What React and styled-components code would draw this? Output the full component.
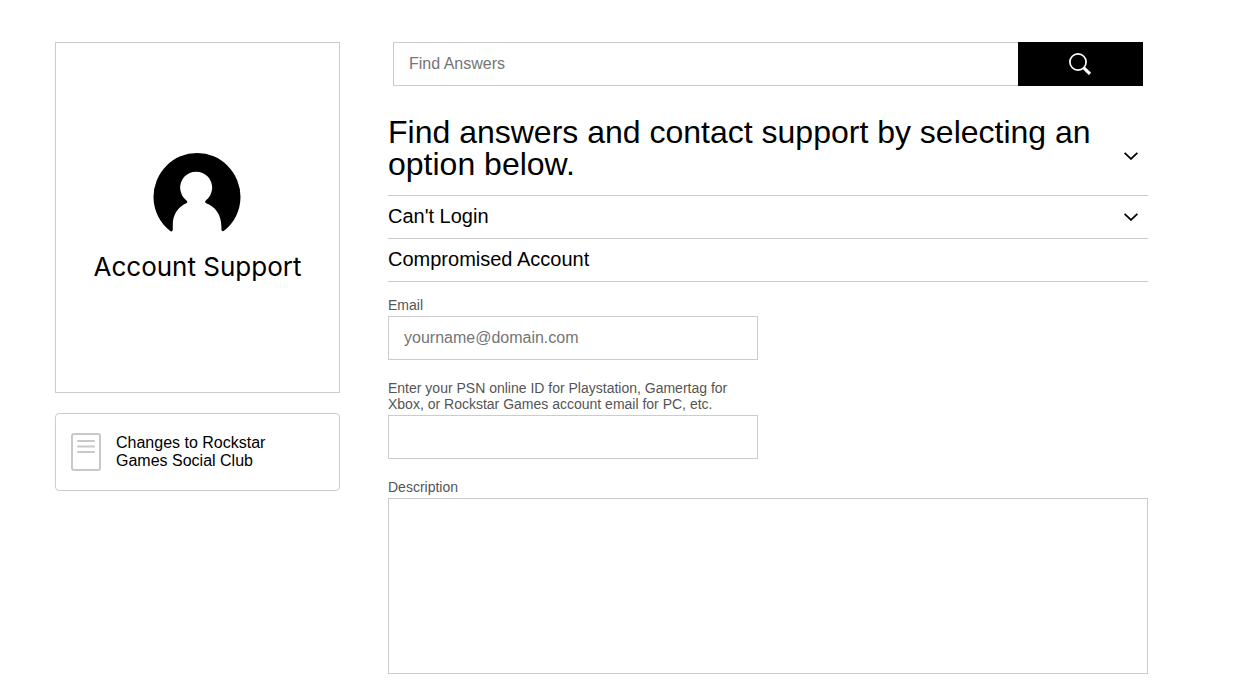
import React, { useState } from 'react';
import styled, { createGlobalStyle } from 'styled-components';

const color = {
  black: '#000',
  border: '#ccc',
  icon: '#c8c8c8',
  label: '#555',
  placeholder: '#757575'
};

const GlobalStyle = createGlobalStyle`
  * {
    box-sizing: border-box;
  }

  body {
    margin: 0;
    background: #fff;
    color: ${color.black};
    font-family: "Liberation Sans", Arial, sans-serif;
  }
`;

const Page = styled.div`
  display: flex;
  align-items: flex-start;
  gap: 48px;
  padding: 42px 101px 24px 55px;
`;

const Sidebar = styled.aside`
  display: flex;
  flex-direction: column;
  flex: 0 0 285px;
  gap: 20px;
`;

const TopicCard = styled.div`
  display: flex;
  flex-direction: column;
  align-items: center;
  gap: 10px;
  padding: 110px 16px 109px;
  border: solid 1px ${color.border};
`;

const TopicTitle = styled.h1`
  margin: 0;
  font-family: Inter, sans-serif;
  font-size: 26px;
  font-weight: 400;
  line-height: 32px;
`;

const ArticleLink = styled.a`
  display: flex;
  align-items: center;
  gap: 15px;
  padding: 19px 15px;
  border: solid 1px ${color.border};
  border-radius: 4px;
  color: ${color.black};
  font-size: 16px;
  line-height: 18px;
  text-decoration: none;
`;

const ArticleTitle = styled.span`
  max-width: 170px;
`;

const Main = styled.main`
  flex: 1;
  min-width: 0;
`;

const SearchForm = styled.form`
  display: flex;
  margin: 0 5px 30px;
`;

const TextInput = styled.input`
  display: block;
  width: 100%;
  height: 44px;
  padding: 0 15px;
  border: solid 1px ${color.border};
  border-radius: 0;
  background: #fff;
  color: ${color.black};
  font-family: inherit;
  font-size: 16px;

  &::placeholder {
    color: ${color.placeholder};
    opacity: 1;
  }
`;

const SearchInput = styled(TextInput)`
  flex: 1;
  min-width: 0;
  border-right: 0;
`;

const SearchButton = styled.button`
  display: flex;
  align-items: center;
  justify-content: center;
  flex: 0 0 125px;
  padding: 0;
  border: 0;
  background: ${color.black};
  color: #fff;
  cursor: pointer;
`;

const StepHeading = styled.h2`
  margin: 0;
  border-bottom: solid 1px ${color.border};
  font-size: ${({ $large }) => ($large ? '32px' : '20px')};
  font-weight: 400;
  line-height: ${({ $large }) => ($large ? '32px' : '24px')};
`;

const StepButton = styled.button`
  display: flex;
  align-items: center;
  justify-content: space-between;
  gap: 16px;
  width: 100%;
  padding: 0 10px 0 0;
  border: 0;
  background: none;
  color: inherit;
  font: inherit;
  text-align: left;
  cursor: pointer;

  svg {
    flex-shrink: 0;
  }
`;

const StepText = styled.span`
  padding: ${({ $large }) => ($large ? '0 0 15px' : '8px 0 10px')};
`;

const ContactForm = styled.form`
  display: flex;
  flex-direction: column;
  gap: 20px;
  padding-top: 15px;
`;

const Field = styled.div`
  width: ${({ $wide }) => ($wide ? '100%' : 'calc(50% - 10px)')};
`;

const Label = styled.label`
  display: block;
  margin-bottom: 3px;
  color: ${color.label};
  font-size: 14px;
  line-height: 16px;
`;

const TextArea = styled(TextInput).attrs({ as: 'textarea' })`
  height: 176px;
  padding: 15px;
  resize: none;
`;

const AccountIcon = () => (
  <svg width="90" height="88" viewBox="0 0 90 88" aria-hidden="true">
    <path
      d="M17.6 78.2C7 70.2 0.5 57.8 0.5 44A43.5 44 0 0 1 87.5 44C87.5 57.8 81 70.2 71 77.8C70 78.6 68.5 78 68.4 76.5V74C68.4 62 62.5 53.5 53.2 50.2C52 49.7 51.8 48.3 52.8 47.4A16 16 0 1 0 33.5 47.4C34.7 48.3 34.5 49.7 33.3 50.2C25 53.5 19.8 62 19.8 71V76.5C19.7 78 18.7 78.8 17.6 78.2Z"
      fill="currentColor"
    />
  </svg>
);

const ArticleIcon = () => (
  <svg width="30" height="38" viewBox="0 0 30 38" fill="none" stroke={color.icon} strokeWidth="2" aria-hidden="true">
    <rect x="1" y="1" width="28" height="36" rx="2" />
    <path d="M7 8H23M7 13.5H23M7 19H23" strokeLinecap="round" />
  </svg>
);

const SearchIcon = () => (
  <svg width="24" height="22" viewBox="0 0 24 22" fill="none" stroke="currentColor" aria-hidden="true">
    <circle cx="9" cy="9" r="8.1" strokeWidth="1.7" />
    <path d="M14.8 14.8L21 21" strokeWidth="3.2" />
  </svg>
);

const ChevronIcon = () => (
  <svg width="14" height="8" viewBox="0 0 14 8" fill="none" stroke="currentColor" strokeWidth="1.8" aria-hidden="true">
    <path d="M0.6 0.9L7 6.9L13.4 0.9" />
  </svg>
);

const Step = ({ children, large, collapsible }) => (
  <StepHeading $large={ large }>
    <StepButton type="button">
      <StepText $large={ large }>{ children }</StepText>
      { collapsible && <ChevronIcon /> }
    </StepButton>
  </StepHeading>
);

const App = () => {
  const [query, setQuery] = useState('');
  const submit = event => event.preventDefault();

  return (
    <>
      <GlobalStyle />
      <Page>
        <Sidebar>
          <TopicCard>
            <AccountIcon />
            <TopicTitle>Account Support</TopicTitle>
          </TopicCard>
          <ArticleLink href="#social-club">
            <ArticleIcon />
            <ArticleTitle>Changes to Rockstar Games Social Club</ArticleTitle>
          </ArticleLink>
        </Sidebar>
        <Main>
          <SearchForm role="search" onSubmit={ submit }>
            <SearchInput
              type="text"
              aria-label="Find Answers"
              placeholder="Find Answers"
              value={ query }
              onChange={ event => setQuery(event.target.value) }
            />
            <SearchButton type="submit" aria-label="Search">
              <SearchIcon />
            </SearchButton>
          </SearchForm>
          <Step large collapsible>Find answers and contact support by selecting an option below.</Step>
          <Step collapsible>{'Can\'t Login'}</Step>
          <Step>Compromised Account</Step>
          <ContactForm onSubmit={ submit }>
            <Field>
              <Label htmlFor="email">Email</Label>
              <TextInput id="email" type="email" placeholder="yourname@domain.com" />
            </Field>
            <Field>
              <Label htmlFor="account">
                Enter your PSN online ID for Playstation, Gamertag for Xbox, or Rockstar Games account email for PC, etc.
              </Label>
              <TextInput id="account" type="text" />
            </Field>
            <Field $wide>
              <Label htmlFor="description">Description</Label>
              <TextArea id="description" />
            </Field>
          </ContactForm>
        </Main>
      </Page>
    </>
  );
};

export default App;
